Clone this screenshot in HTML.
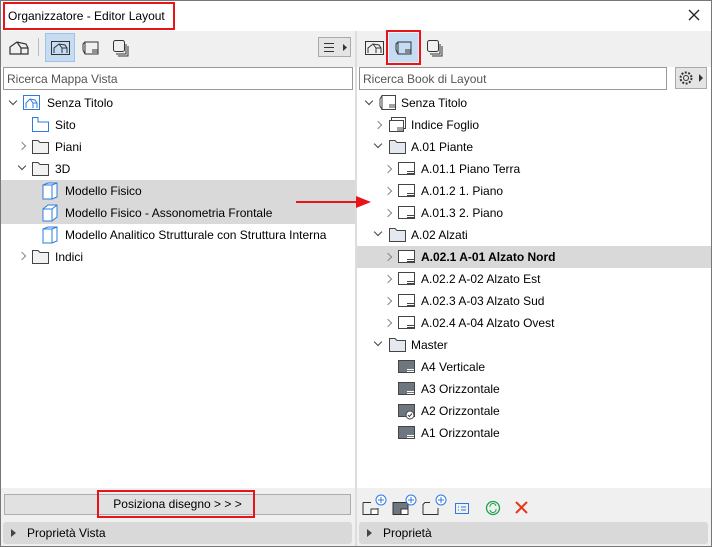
<!DOCTYPE html>
<html><head><meta charset="utf-8"><style>
*{margin:0;padding:0;box-sizing:border-box}
body{width:712px;height:547px;position:relative;overflow:hidden;background:#fff;font-family:"Liberation Sans",sans-serif;font-size:12px;color:#000}
.a{position:absolute}
.t{position:absolute;white-space:nowrap;line-height:22px;height:22px}
.chev{position:absolute;width:6px;height:6px;border-right:1.5px solid #888;border-bottom:1.5px solid #888}
.r{transform:rotate(-45deg)}
.d{transform:rotate(45deg);border-color:#444}
</style></head><body>
<div class="a" style="left:0;top:0;width:712px;height:547px;border:1px solid #777"></div>
<div class="t" style="left:8px;top:5px">Organizzatore - Editor Layout</div>
<div class="a" style="left:3px;top:2px;width:172px;height:28px;border:2px solid #e8141b"></div>
<svg class="a" style="left:688px;top:9px" width="12" height="12"><path d="M1 1L11 11M11 1L1 11" stroke="#222" stroke-width="1.3"/></svg>
<!-- toolbars -->
<div class="a" style="left:1px;top:31px;width:354px;height:36px;background:#f0f0f0"></div>
<div class="a" style="left:357px;top:31px;width:354px;height:36px;background:#f0f0f0"></div>
<div class="a" style="left:355px;top:31px;width:2px;height:515px;background:#ddd"></div>
<svg class="a" style="left:8px;top:38px" width="22" height="20"><path d="M2 16V9L9 4L18 6L20 10V16ZM9 4L13 10V16M13 10H20" fill="none" stroke="#333" stroke-width="1.2"/></svg>
<div class="a" style="left:38px;top:38px;width:1px;height:18px;background:#bbb"></div>
<div class="a" style="left:45px;top:33px;width:30px;height:29px;background:#c5dcf2;border:1px solid #9fc3e6"></div>
<svg class="a" style="left:50px;top:38px" width="22" height="20"><rect x="1.5" y="3.5" width="18" height="13" fill="none" stroke="#333"/><path d="M4 15V10L9 6L15 7L17 10V15M9 6L12 10V15M12 10H17" fill="none" stroke="#333"/></svg>
<svg class="a" style="left:80px;top:38px" width="22" height="20"><path d="M5 4H18V16H5L3 12V6Z M5 4V16M12 12H18M12 14H18" fill="none" stroke="#333"/></svg>
<svg class="a" style="left:110px;top:38px" width="22" height="20"><rect x="3.5" y="2.5" width="11" height="11" rx="2" fill="none" stroke="#333"/><path d="M6 16H16V6M8 18H18V8" fill="none" stroke="#333"/></svg>
<div class="a" style="left:318px;top:37px;width:33px;height:20px;background:#e4e4e4;border:1px solid #aaa"></div>
<svg class="a" style="left:324px;top:42px" width="26" height="11"><path d="M0 1.5H10M0 5.5H10M0 9.5H10" stroke="#333"/><path d="M19 2L23 5.5L19 9Z" fill="#333"/></svg>
<svg class="a" style="left:364px;top:38px" width="22" height="20"><rect x="1.5" y="3.5" width="18" height="13" fill="none" stroke="#333"/><path d="M4 15V10L9 6L15 7L17 10V15M9 6L12 10V15M12 10H17" fill="none" stroke="#333"/></svg>
<div class="a" style="left:389px;top:33px;width:29px;height:29px;background:#c5dcf2"></div>
<div class="a" style="left:386px;top:30px;width:35px;height:35px;border:2px solid #e8141b"></div>
<svg class="a" style="left:393px;top:38px" width="22" height="20"><path d="M5 4H18V16H5L3 12V6Z M5 4V16M12 12H18M12 14H18" fill="none" stroke="#333"/></svg>
<svg class="a" style="left:424px;top:38px" width="22" height="20"><rect x="3.5" y="2.5" width="11" height="11" rx="2" fill="none" stroke="#333"/><path d="M6 16H16V6M8 18H18V8" fill="none" stroke="#333"/></svg>
<!-- search -->
<div class="a" style="left:3px;top:67px;width:350px;height:23px;border:1px solid #999;background:#fff"></div>
<div class="t" style="left:7px;top:68px;color:#555">Ricerca Mappa Vista</div>
<div class="a" style="left:359px;top:67px;width:308px;height:23px;border:1px solid #999;background:#fff"></div>
<div class="t" style="left:363px;top:68px;color:#555">Ricerca Book di Layout</div>
<div class="a" style="left:675px;top:67px;width:32px;height:22px;background:#e4e4e4;border:1px solid #aaa"></div>
<svg class="a" style="left:678px;top:70px" width="28" height="17"><circle cx="8" cy="8" r="5.5" fill="none" stroke="#333" stroke-dasharray="2 1.5" stroke-width="2"/><circle cx="8" cy="8" r="2.5" fill="none" stroke="#333"/><path d="M21 4L25 8L21 12Z" fill="#333"/></svg>
<!-- left tree -->
<div class="a" style="left:1px;top:180px;width:354px;height:44px;background:#d9d9d9"></div>
<div class="chev d" style="left:10px;top:98px"></div>
<svg class="a" style="left:23px;top:95px" width="18" height="16"><rect x=".5" y=".5" width="16" height="14" fill="none" stroke="#2e7be0"/><path d="M3 13V8L7 4L12 5L14 8V13M7 4L10 8V13M10 8H14" fill="none" stroke="#2e7be0"/></svg>
<div class="t" style="left:47px;top:92px">Senza Titolo</div>
<svg class="a" style="left:32px;top:117px" width="18" height="16"><path d="M.5 .5H6V5H16.5V14.5H.5Z" fill="none" stroke="#2e7be0"/></svg>
<div class="t" style="left:55px;top:114px">Sito</div>
<div class="chev r" style="left:19px;top:143px"></div>
<svg class="a" style="left:32px;top:139px" width="18" height="16"><path d="M.5 14.5V1.5H6L8 3.5H16.5V14.5Z" fill="#f2f2f2" stroke="#444"/></svg>
<div class="t" style="left:55px;top:136px">Piani</div>
<div class="chev d" style="left:19px;top:163px"></div>
<svg class="a" style="left:32px;top:161px" width="18" height="16"><path d="M.5 14.5V1.5H6L8 3.5H16.5V14.5Z" fill="#f2f2f2" stroke="#444"/></svg>
<div class="t" style="left:55px;top:158px">3D</div>
<svg class="a" style="left:42px;top:182px" width="18" height="18"><path d="M1 3L6 1H15V15L10 17H1ZM1 3H10V17M10 3L15 1" fill="#fff" stroke="#2e7be0"/></svg>
<div class="t" style="left:65px;top:180px">Modello Fisico</div>
<svg class="a" style="left:42px;top:204px" width="18" height="18"><path d="M1 5L6 1H15V13L10 17H1ZM1 5H10V17M10 5L15 1" fill="#fff" stroke="#2e7be0"/></svg>
<div class="t" style="left:65px;top:202px">Modello Fisico - Assonometria Frontale</div>
<svg class="a" style="left:42px;top:226px" width="18" height="18"><path d="M1 3L6 1H15V15L10 17H1ZM1 3H10V17M10 3L15 1" fill="#fff" stroke="#2e7be0"/></svg>
<div class="t" style="left:65px;top:224px">Modello Analitico Strutturale con Struttura Interna</div>
<div class="chev r" style="left:19px;top:253px"></div>
<svg class="a" style="left:32px;top:249px" width="18" height="16"><path d="M.5 14.5V1.5H6L8 3.5H16.5V14.5Z" fill="#f2f2f2" stroke="#444"/></svg>
<div class="t" style="left:55px;top:246px">Indici</div>
<!-- arrow -->
<div class="a" style="left:296px;top:201px;width:62px;height:2px;background:#e8141b"></div>
<svg class="a" style="left:356px;top:196px" width="16" height="12"><path d="M0 0L15 6L0 12Z" fill="#e8141b"/></svg>
<!-- right tree -->
<div class="a" style="left:357px;top:246px;width:354px;height:22px;background:#d9d9d9"></div>
<div class="chev d" style="left:366px;top:98px"></div>
<svg class="a" style="left:379px;top:95px" width="18" height="16"><path d="M3 .5H16.5V14.5H3L1 11V4Z M3 .5V14.5M10 10H16M10 12H16" fill="none" stroke="#444"/></svg>
<div class="t" style="left:401px;top:92px">Senza Titolo</div>
<div class="chev r" style="left:375px;top:122px"></div>
<svg class="a" style="left:389px;top:117px" width="18" height="16"><rect x="2.5" y=".5" width="14" height="11" fill="none" stroke="#444"/><rect x=".5" y="3.5" width="14" height="11" fill="#fff" stroke="#444"/><path d="M8 11H14M8 13H14" stroke="#444"/></svg>
<div class="t" style="left:411px;top:114px">Indice Foglio</div>
<div class="chev d" style="left:375px;top:141px"></div>
<svg class="a" style="left:389px;top:139px" width="18" height="16"><path d="M.5 14.5V1.5H6L8 3.5H16.5V14.5Z" fill="#e4e9f0" stroke="#444"/></svg>
<div class="t" style="left:411px;top:136px">A.01 Piante</div>
<div class="chev d" style="left:375px;top:229px"></div>
<svg class="a" style="left:389px;top:227px" width="18" height="16"><path d="M.5 14.5V1.5H6L8 3.5H16.5V14.5Z" fill="#e4e9f0" stroke="#444"/></svg>
<div class="t" style="left:411px;top:224px">A.02 Alzati</div>
<div class="chev d" style="left:375px;top:339px"></div>
<svg class="a" style="left:389px;top:337px" width="18" height="16"><path d="M.5 14.5V1.5H6L8 3.5H16.5V14.5Z" fill="#e4e9f0" stroke="#444"/></svg>
<div class="t" style="left:411px;top:334px">Master</div>
<!-- sheets -->
<svg class="a" style="left:0;top:0" width="712" height="547" style="position:absolute">
<g fill="none" stroke="#555" transform="translate(386 0)">
<path d="M2 160 l-0 0"/>
</g></svg>
<div id="sheets"></div>
<div class="chev r" style="left:385px;top:166px"></div><svg class="a" style="left:398px;top:162px" width="18" height="14"><rect x=".5" y=".5" width="16" height="12" fill="#fff" stroke="#444"/><path d="M9 9.5H16M9 11.5H16" stroke="#444"/></svg><div class="t" style="left:421px;top:158px">A.01.1 Piano Terra</div>
<div class="chev r" style="left:385px;top:188px"></div><svg class="a" style="left:398px;top:184px" width="18" height="14"><rect x=".5" y=".5" width="16" height="12" fill="#fff" stroke="#444"/><path d="M9 9.5H16M9 11.5H16" stroke="#444"/></svg><div class="t" style="left:421px;top:180px">A.01.2 1. Piano</div>
<div class="chev r" style="left:385px;top:210px"></div><svg class="a" style="left:398px;top:206px" width="18" height="14"><rect x=".5" y=".5" width="16" height="12" fill="#fff" stroke="#444"/><path d="M9 9.5H16M9 11.5H16" stroke="#444"/></svg><div class="t" style="left:421px;top:202px">A.01.3 2. Piano</div>
<div class="chev r" style="left:385px;top:254px"></div><svg class="a" style="left:398px;top:250px" width="18" height="14"><rect x=".5" y=".5" width="16" height="12" fill="#fff" stroke="#444"/><path d="M9 9.5H16M9 11.5H16" stroke="#444"/></svg><div class="t" style="left:421px;top:246px;font-weight:bold">A.02.1 A-01 Alzato Nord</div>
<div class="chev r" style="left:385px;top:276px"></div><svg class="a" style="left:398px;top:272px" width="18" height="14"><rect x=".5" y=".5" width="16" height="12" fill="#fff" stroke="#444"/><path d="M9 9.5H16M9 11.5H16" stroke="#444"/></svg><div class="t" style="left:421px;top:268px">A.02.2 A-02 Alzato Est</div>
<div class="chev r" style="left:385px;top:298px"></div><svg class="a" style="left:398px;top:294px" width="18" height="14"><rect x=".5" y=".5" width="16" height="12" fill="#fff" stroke="#444"/><path d="M9 9.5H16M9 11.5H16" stroke="#444"/></svg><div class="t" style="left:421px;top:290px">A.02.3 A-03 Alzato Sud</div>
<div class="chev r" style="left:385px;top:320px"></div><svg class="a" style="left:398px;top:316px" width="18" height="14"><rect x=".5" y=".5" width="16" height="12" fill="#fff" stroke="#444"/><path d="M9 9.5H16M9 11.5H16" stroke="#444"/></svg><div class="t" style="left:421px;top:312px">A.02.4 A-04 Alzato Ovest</div>
<svg class="a" style="left:398px;top:360px" width="18" height="14"><rect x=".5" y=".5" width="16" height="12" fill="#6e7680" stroke="#444"/><path d="M9 9.5H16M9 11.5H16" stroke="#fff"/></svg><div class="t" style="left:421px;top:356px">A4 Verticale</div>
<svg class="a" style="left:398px;top:382px" width="18" height="14"><rect x=".5" y=".5" width="16" height="12" fill="#6e7680" stroke="#444"/><path d="M9 9.5H16M9 11.5H16" stroke="#fff"/></svg><div class="t" style="left:421px;top:378px">A3 Orizzontale</div>
<svg class="a" style="left:398px;top:404px" width="18" height="16"><rect x=".5" y=".5" width="16" height="12" fill="#6e7680" stroke="#444"/><circle cx="12" cy="11" r="4" fill="#fff" stroke="#444"/><path d="M10 11L11.5 12.5L14 9.5" fill="none" stroke="#444"/></svg><div class="t" style="left:421px;top:400px">A2 Orizzontale</div>
<svg class="a" style="left:398px;top:426px" width="18" height="14"><rect x=".5" y=".5" width="16" height="12" fill="#6e7680" stroke="#444"/><path d="M9 9.5H16M9 11.5H16" stroke="#fff"/></svg><div class="t" style="left:421px;top:422px">A1 Orizzontale</div>
<!-- bottom left -->
<div class="a" style="left:1px;top:488px;width:354px;height:58px;background:#f0f0f0"></div>
<div class="a" style="left:4px;top:494px;width:347px;height:21px;background:#e1e1e1;border:1px solid #adadad"></div>
<div class="t" style="left:0;width:355px;text-align:center;top:493px">Posiziona disegno &gt; &gt; &gt;</div>
<div class="a" style="left:97px;top:490px;width:158px;height:28px;border:2px solid #e8141b"></div>
<div class="a" style="left:3px;top:522px;width:349px;height:22px;background:#d9d9d9;border-radius:3px"></div>
<svg class="a" style="left:11px;top:529px" width="6" height="8"><path d="M0 0L5 4L0 8Z" fill="#444"/></svg>
<div class="t" style="left:27px;top:522px">Proprietà Vista</div>
<!-- bottom right -->
<div class="a" style="left:357px;top:488px;width:354px;height:58px;background:#f0f0f0"></div>
<svg class="a" style="left:360px;top:492px" width="180" height="24">
<g fill="none" stroke="#333"><path d="M3 10.5H11M3 10.5V22.5H18V16"/><rect x="11" y="17" width="7" height="5.5" fill="#fff"/></g>
<circle cx="21" cy="8" r="5" fill="#fff" stroke="#2e7be0"/><path d="M21 5V11M18 8H24" stroke="#2e7be0"/>
<rect x="33" y="10.5" width="15" height="12" fill="#6e7680" stroke="#333"/><rect x="41" y="17" width="7" height="5.5" fill="#fff" stroke="#333"/>
<circle cx="51" cy="8" r="5" fill="#fff" stroke="#2e7be0"/><path d="M51 5V11M48 8H54" stroke="#2e7be0"/>
<path d="M63 22.5V12.5L65 10.5H70M63 22.5H78V16" fill="none" stroke="#333"/>
<circle cx="81" cy="8" r="5" fill="#fff" stroke="#2e7be0"/><path d="M81 5V11M78 8H84" stroke="#2e7be0"/>
<rect x="95.5" y="11.5" width="13" height="10" fill="none" stroke="#2e7be0"/><path d="M98 15H99M98 18H99M101 15H106M101 18H106" stroke="#2e7be0"/>
<circle cx="133" cy="16" r="6.5" fill="none" stroke="#1aa34a" stroke-width="1.3"/><path d="M130 15A3 3 0 0 1 136 14M136 17A3 3 0 0 1 130 18" fill="none" stroke="#1aa34a"/>
<path d="M156 10L167 21M167 10L156 21" stroke="#e8341b" stroke-width="2"/>
</svg>
<div class="a" style="left:359px;top:522px;width:349px;height:22px;background:#d9d9d9;border-radius:3px"></div>
<svg class="a" style="left:367px;top:529px" width="6" height="8"><path d="M0 0L5 4L0 8Z" fill="#444"/></svg>
<div class="t" style="left:383px;top:522px">Proprietà</div>
</body></html>
